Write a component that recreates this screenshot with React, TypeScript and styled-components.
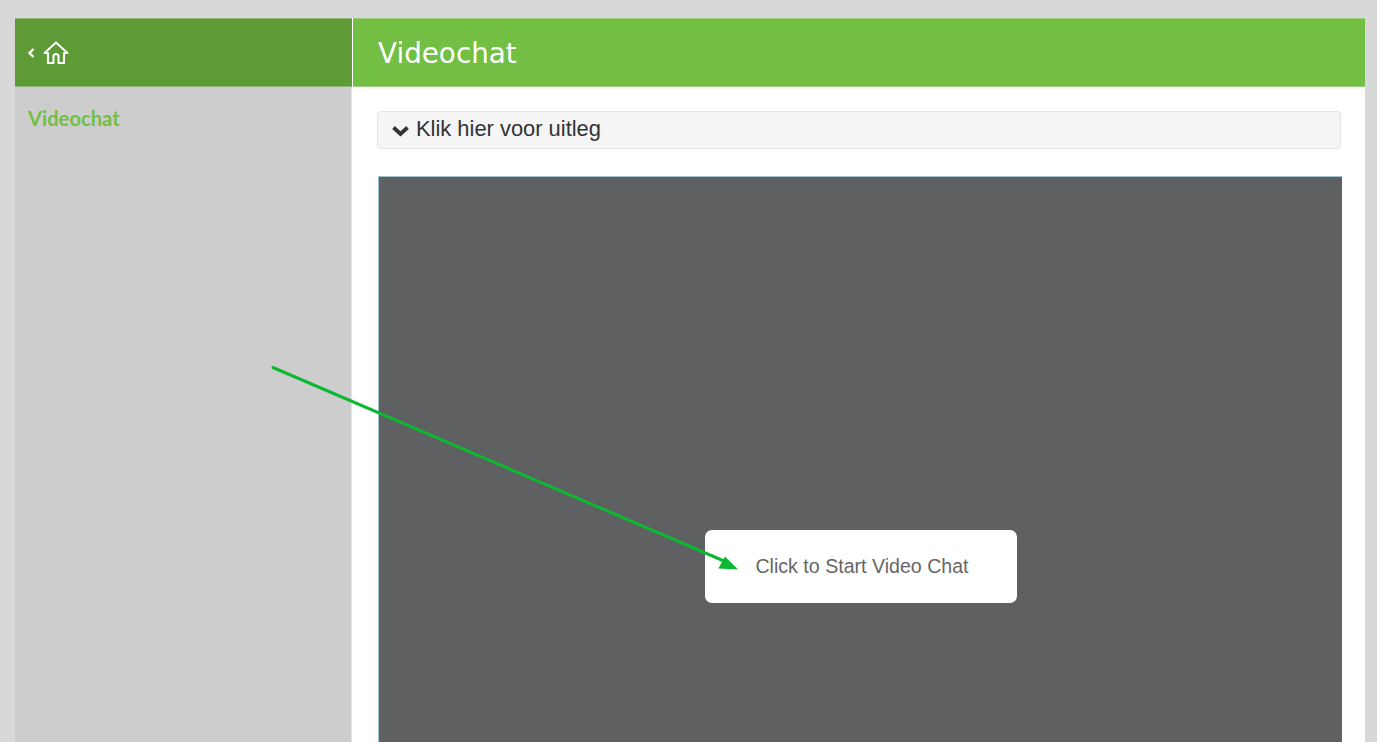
import styled, { createGlobalStyle } from 'styled-components';

const GlobalStyle = createGlobalStyle`
  html, body {
    margin: 0;
    padding: 0;
    height: 100%;
    overflow: hidden;
    background-color: #d8d8d8;
  }
`

const Page = styled.div`
  position: relative;
  height: 742px;
  overflow: hidden;
  padding: 18px 12px 0 15px;
  box-sizing: border-box;
`

const Shell = styled.div`
  display: grid;
  grid-template-columns: 337px 1fr;
  grid-template-rows: 69px 1fr;
  height: 100%;
  background-color: #fff;
`

const HomeBar = styled.div`
  display: flex;
  align-items: center;
  gap: 7px;
  padding-left: 12px;
  background-color: #5e9a35;
  border-top: 1px solid #8cb672;
  border-bottom: 1px solid #8cb672;
  box-sizing: border-box;
`

const TitleBar = styled.div`
  display: flex;
  align-items: center;
  padding: 2px 0 0 25px;
  margin-left: 1px;
  background-color: #72bf44;
  border-top: 1px solid #9ccf7d;
  border-bottom: 1px solid #9ccf7d;
  box-sizing: border-box;
`

const Title = styled.h1`
  margin: 0;
  color: #fff;
  font-family: "DejaVu Sans", sans-serif;
  font-size: 27.8px;
  font-weight: 400;
`

const Sidebar = styled.div`
  padding: 19px 13px;
  background-color: #cdcdcd;
  border-right: 1px solid #e6e6e6;
`

const SideLink = styled.div`
  color: #72bf44;
  font-family: "Lato", sans-serif;
  font-size: 20.2px;
  font-weight: 700;
  line-height: 24px;
`

const Content = styled.div`
  display: flex;
  flex-direction: column;
  gap: 27px;
  padding: 24px 24px 0 26px;
  min-height: 0;
`

const Explain = styled.div`
  display: flex;
  align-items: center;
  gap: 6px;
  height: 38px;
  margin-left: -1px;
  padding: 0 0 2px 13px;
  box-sizing: border-box;
  background-color: #f5f5f5;
  border: 1px solid #e3e3e3;
  border-radius: 4px;
  color: #333;
  font-family: "Liberation Sans", sans-serif;
  font-size: 21.9px;
`

const ExplainChevron = styled.svg`
  margin-top: 4px;
`

const VideoPane = styled.div`
  flex: 1;
  display: flex;
  align-items: flex-start;
  justify-content: center;
  margin-right: -1px;
  padding: 353px 0 0 1px;
  background-color: #5f6062;
  border-top: 1px solid #9cc4cc;
  border-left: 1px solid #9cc4cc;
`

const StartButton = styled.div`
  display: flex;
  align-items: center;
  justify-content: center;
  width: 312px;
  height: 73px;
  padding-left: 2px;
  box-sizing: border-box;
  background-color: #fff;
  border-radius: 7px;
  color: #666;
  font-family: "Liberation Sans", sans-serif;
  font-size: 19.6px;
`

const Arrow = styled.svg`
  position: absolute;
  top: 0;
  left: 0;
  pointer-events: none;
`

function App() {
  return (
    <Page>
      <GlobalStyle />
      <Shell>
        <HomeBar>
          <svg width="9" height="12" viewBox="0 0 9 12" fill="none">
            <path d="M6.5 2 L2.5 6 L6.5 10" stroke="#fff" strokeWidth="2.4" />
          </svg>
          <svg width="26" height="24" viewBox="0 0 26 24" fill="none" stroke="#fff" strokeWidth="2" strokeLinejoin="round">
            <path d="M1.5 12 L13 1.5 L24.5 12 L21 12 L21 22 L15.5 22 L15.5 15.5 Q15.5 13 13 13 Q10.5 13 10.5 15.5 L10.5 22 L5 22 L5 12 Z" />
          </svg>
        </HomeBar>
        <TitleBar>
          <Title>Videochat</Title>
        </TitleBar>
        <Sidebar>
          <SideLink>Videochat</SideLink>
        </Sidebar>
        <Content>
          <Explain>
            <ExplainChevron width="19" height="12" viewBox="0 0 19 12" fill="none">
              <path d="M2.5 2.5 L9.5 9 L16.5 2.5" stroke="#333" strokeWidth="3.8" />
            </ExplainChevron>
            Klik hier voor uitleg
          </Explain>
          <VideoPane>
            <StartButton>Click to Start Video Chat</StartButton>
          </VideoPane>
        </Content>
      </Shell>
      <Arrow width="1377" height="742" viewBox="0 0 1377 742" fill="none">
        <path d="M273 367.5 L724 561" stroke="#0cb832" strokeWidth="3" strokeLinecap="round" />
        <path d="M738 569.5 L718.3 568.5 L725 556.5 Z" fill="#0cb832" />
      </Arrow>
    </Page>
  )
}

export default App
